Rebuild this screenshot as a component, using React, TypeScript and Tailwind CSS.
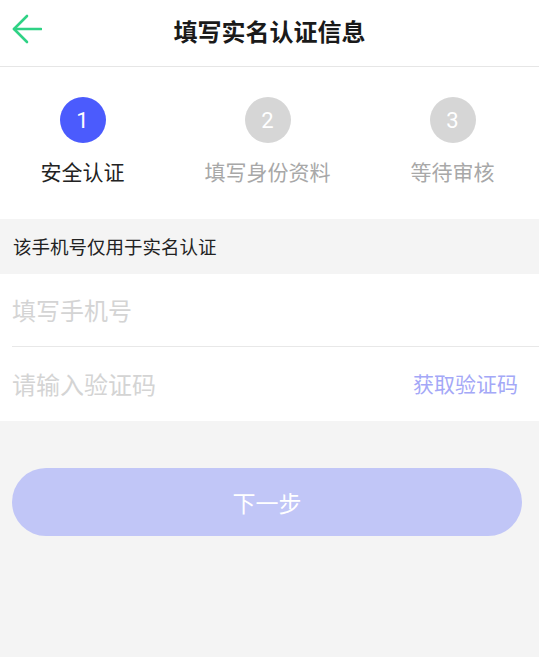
import { useState } from "react";

const steps = [
  { num: 1, label: "安全认证", active: true },
  { num: 2, label: "填写身份资料", active: false },
  { num: 3, label: "等待审核", active: false },
];

export default function App() {
  const [phone, setPhone] = useState("");
  const [code, setCode] = useState("");

  return (
    <div
      className="min-h-[657px] w-full bg-[#f4f4f4]"
      style={{ fontFamily: '"Noto Sans CJK SC", "Noto Sans", sans-serif' }}
    >
      <header className="relative flex h-[67px] items-center justify-center border-b border-[#e6e6e6] bg-white pb-[4px]">
        <button
          aria-label="返回"
          className="absolute left-[12px] top-[14px] flex h-[30px] w-[30px] items-center justify-center"
          type="button"
        >
          <svg
            fill="none"
            height="30"
            stroke="#2fd285"
            strokeLinecap="round"
            strokeLinejoin="round"
            strokeWidth="2.6"
            viewBox="0 0 30 30"
            width="30"
          >
            <path d="M29 15H2" />
            <path d="M15 2L2 15l13 13" />
          </svg>
        </button>
        <h1 className="text-[24px] font-bold leading-none text-[#1a1a1a]">
          填写实名认证信息
        </h1>
      </header>

      <section className="overflow-hidden bg-white pb-[34px] pt-[30px]">
        <div className="-ml-[10px] flex">
          {steps.map((step) => (
            <div
              className="flex w-[185px] shrink-0 flex-col items-center"
              key={step.num}
            >
              <div
                className={
                  step.active
                    ? "flex h-[46px] w-[46px] items-center justify-center rounded-full bg-[#4b5bfd] font-['Roboto'] text-[22px] text-white"
                    : "flex h-[46px] w-[46px] items-center justify-center rounded-full bg-[#d6d6d6] font-['Roboto'] text-[22px] text-white"
                }
              >
                {step.num}
              </div>
              <span
                className={
                  step.active
                    ? "mt-[14px] text-[21px] leading-[28px] text-[#222222]"
                    : "mt-[14px] text-[21px] leading-[28px] text-[#a8a8a8]"
                }
              >
                {step.label}
              </span>
            </div>
          ))}
        </div>
      </section>

      <div className="flex h-[55px] items-center px-[13px] text-[18.5px] text-[#222222]">
        该手机号仅用于实名认证
      </div>

      <div className="bg-white">
        <div className="ml-[12px] flex h-[73px] items-center border-b border-[#e8e8e8]">
          <input
            className="w-full bg-transparent text-[24px] text-[#333333] outline-none placeholder:text-[#d4d4d4]"
            onChange={(e) => setPhone(e.target.value)}
            placeholder="填写手机号"
            value={phone}
          />
        </div>
        <div className="flex h-[74px] items-center pl-[12px] pr-[21px]">
          <input
            className="min-w-0 flex-1 bg-transparent text-[24px] text-[#333333] outline-none placeholder:text-[#d4d4d4]"
            onChange={(e) => setCode(e.target.value)}
            placeholder="请输入验证码"
            value={code}
          />
          <button className="text-[21px] text-[#a4a8f7]" type="button">
            获取验证码
          </button>
        </div>
      </div>

      <div className="px-[12px] pt-[47px]">
        <button
          className="flex h-[68px] w-[510px] items-center justify-center rounded-full bg-[#c1c6f7] text-[23px] text-white"
          type="button"
        >
          下一步
        </button>
      </div>
    </div>
  );
}
